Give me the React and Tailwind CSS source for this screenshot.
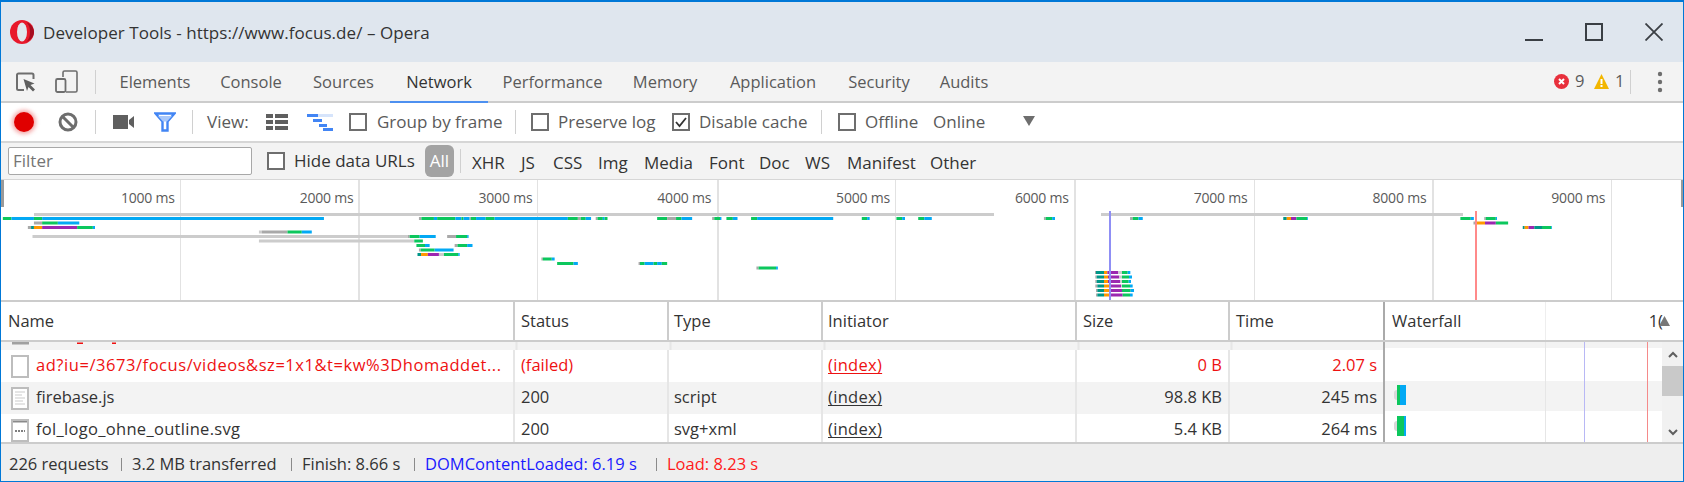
const GREEN = "#0cc75d";
const BLUE = "#03a9f4";
const TEAL = "#009688";
const ORANGE = "#ff9800";
const PURPLE = "#9c27b0";
const GREY = "#a9a9a9";
const LIGHT = "#cccccc";

// bars of the overview: [origin, scale, y, [from, to, colour]...]
const A = [0, 1 / 2.8];
const B = [560, 1 / 2.8];
const C = [1080, 0.385];
const D = [1080, 1 / 3];
const bars = [
  [...A, 218, [8, 32, GREEN], [32, 95, BLUE], [95, 118, GREEN], [118, 907, BLUE], [1173, 1180, GREY], [1180, 1215, GREEN], [1215, 1224, BLUE], [1224, 1275, GREEN], [1275, 1292, BLUE], [1292, 1298, GREEN], [1298, 1315, BLUE], [1315, 1318, GREY], [1318, 1333, GREEN], [1333, 1360, BLUE], [1360, 1385, GREEN], [1385, 1568, BLUE]],
  [...B, 218, [0, 22, BLUE], [22, 50, GREEN], [50, 58, GREY], [58, 72, GREEN], [72, 87, BLUE], [100, 105, GREY], [105, 120, GREEN], [120, 125, BLUE], [125, 133, GREEN], [272, 300, GREEN], [300, 325, GREY], [325, 340, GREEN], [340, 370, BLUE], [426, 432, GREY], [432, 448, GREEN], [448, 452, BLUE], [466, 484, GREEN], [484, 497, BLUE], [535, 552, GREEN], [552, 765, BLUE], [845, 860, GREEN], [860, 867, BLUE], [942, 958, GREEN], [958, 966, BLUE], [1003, 1020, GREEN], [1020, 1041, BLUE], [1355, 1360, GREY], [1360, 1378, GREEN], [1378, 1386, BLUE]],
  [...C, 218, [130, 137, GREY], [137, 152, GREEN], [152, 163, BLUE], [528, 537, TEAL], [537, 548, ORANGE], [548, 562, PURPLE], [562, 590, GREEN], [590, 592, BLUE], [988, 1015, GREEN], [1015, 1023, BLUE], [1050, 1054, GREY], [1054, 1080, GREEN], [1080, 1083, BLUE]],
  [...A, 222.5, [95, 118, GREY], [118, 162, GREEN], [162, 222, BLUE]],
  [...C, 222.5, [1022, 1030, GREY], [1030, 1052, ORANGE], [1052, 1080, PURPLE], [1080, 1112, GREEN]],
  [...A, 227, [78, 87, GREY], [87, 95, TEAL], [95, 118, ORANGE], [118, 216, PURPLE], [216, 260, GREEN], [260, 266, BLUE]],
  [...C, 227, [1150, 1155, TEAL], [1155, 1165, ORANGE], [1165, 1180, PURPLE], [1180, 1200, TEAL], [1200, 1224, GREEN], [1224, 1226, BLUE]],
  [...A, 231.5, [725, 733, LIGHT], [733, 805, GREY], [805, 845, GREEN], [845, 873, BLUE]],
  [...A, 236, [91, 1142, LIGHT], [1142, 1147, GREY], [1147, 1175, GREEN], [1175, 1220, BLUE], [1252, 1277, GREY], [1277, 1308, GREEN], [1308, 1312, BLUE]],
  [...A, 240.5, [725, 1160, LIGHT], [1160, 1184, GREEN]],
  [...A, 245, [1166, 1190, GREEN], [1190, 1203, BLUE], [1273, 1281, GREY], [1281, 1308, GREEN], [1308, 1323, BLUE]],
  [...A, 249.5, [1173, 1178, GREY], [1178, 1217, GREEN], [1217, 1270, BLUE]],
  [...A, 254, [1169, 1179, TEAL], [1179, 1198, ORANGE], [1198, 1229, PURPLE], [1229, 1243, LIGHT], [1243, 1283, GREEN], [1283, 1287, BLUE]],
  [...A, 258.5, [1516, 1520, GREY], [1520, 1545, GREEN], [1545, 1553, BLUE]],
  [...A, 263, [1560, 1568, GREEN]],
  [...B, 263, [0, 38, GREEN], [38, 50, BLUE], [220, 224, GREY], [224, 237, GREEN], [237, 262, BLUE], [262, 272, GREEN], [272, 285, BLUE], [285, 300, GREEN]],
  [...B, 267.5, [550, 556, GREY], [556, 605, GREEN], [605, 610, BLUE]],
  [...D, 272, [45, 48, GREY], [48, 72, TEAL], [72, 82, ORANGE], [82, 115, PURPLE], [115, 126, LIGHT], [126, 143, GREEN], [143, 151, BLUE]],
  [...D, 276.5, [46, 50, GREY], [50, 72, TEAL], [72, 84, ORANGE], [84, 118, PURPLE], [118, 126, LIGHT], [126, 147, GREEN], [147, 156, BLUE]],
  [...D, 281, [46, 50, GREY], [50, 72, TEAL], [72, 84, ORANGE], [84, 120, PURPLE], [120, 126, LIGHT], [126, 146, GREEN], [146, 153, BLUE]],
  [...D, 285.5, [46, 52, GREY], [52, 72, TEAL], [72, 90, ORANGE], [90, 123, PURPLE], [123, 126, LIGHT], [126, 150, GREEN], [150, 158, BLUE]],
  [...D, 290, [48, 52, GREY], [52, 72, TEAL], [72, 88, ORANGE], [88, 126, PURPLE], [126, 152, GREEN], [152, 162, BLUE]],
  [...D, 294.5, [48, 52, GREY], [52, 72, TEAL], [72, 90, ORANGE], [90, 128, PURPLE], [128, 150, GREEN], [150, 158, BLUE]],
];

const gridLines = [180, 358, 537, 717, 895, 1074, 1254, 1432, 1611];
const labels = ["1000 ms", "2000 ms", "3000 ms", "4000 ms", "5000 ms", "6000 ms", "7000 ms", "8000 ms", "9000 ms"];

const tabs = [
  ["Elements", "w-[100px]"],
  ["Console", "w-[92px]"],
  ["Sources", "w-[93px]"],
  ["Network", "w-[98px]"],
  ["Performance", "w-[129px]"],
  ["Memory", "w-[96px]"],
  ["Application", "w-[120px]"],
  ["Security", "w-[92px]"],
  ["Audits", "w-[78px]"],
];

const types = [
  ["XHR", "w-[49px]"],
  ["JS", "w-[32px]"],
  ["CSS", "w-[45px]"],
  ["Img", "w-[46px]"],
  ["Media", "w-[65px]"],
  ["Font", "w-[50px]"],
  ["Doc", "w-[46px]"],
  ["WS", "w-[42px]"],
  ["Manifest", "w-[83px]"],
  ["Other", "w-[60px]"],
];

function Separator({ className }) {
  return <div className={"w-px h-[24px] bg-[#d0d0d0] shrink-0 " + className} />;
}

function Checkbox({ checked, className }) {
  return (
    <div className={"w-[18px] h-[18px] border-2 border-[#6e6e6e] bg-white shrink-0 flex items-center justify-center " + className}>
      {checked && (
        <svg width="14" height="14" viewBox="0 0 14 14" fill="none">
          <path d="M2 7l3.5 4L12 3" stroke="#333" strokeWidth="1.8" />
        </svg>
      )}
    </div>
  );
}

function OperaLogo() {
  return (
    <svg width="24" height="24" viewBox="0 0 24 24" className="shrink-0">
      <circle cx="12" cy="12" r="12" fill="#e8182b" />
      <ellipse cx="12" cy="12" rx="5" ry="9.5" fill="#dfe6ee" />
      <path d="M16.5 2.2C21 4 24 7.7 24 12s-3 8-7.5 9.8C19 19.5 20 16 20 12s-1-7.5-3.5-9.8z" fill="#a50d20" />
    </svg>
  );
}

function TitleBar() {
  return (
    <div className="h-[60px] bg-[#dfe6ee] flex items-center pl-[9px] shrink-0">
      <OperaLogo />
      <div className="ml-[9px] pt-[1px] text-[17px] tracking-[0.05px] text-[#333333]">Developer Tools - https://www.focus.de/ – Opera</div>
      <div className="ml-auto flex items-center">
        <svg width="18" height="18" viewBox="0 0 18 18" className="mr-[42px]">
          <path d="M0 17h18" stroke="#3a3f44" strokeWidth="2" />
        </svg>
        <svg width="18" height="18" viewBox="0 0 18 18" className="mr-[42px]">
          <rect x="1" y="1" width="16" height="16" fill="none" stroke="#3a3f44" strokeWidth="2" />
        </svg>
        <svg width="18" height="18" viewBox="0 0 18 18" className="mr-[20px]">
          <path d="M0.5 0.5l17 17M17.5 0.5l-17 17" stroke="#3a3f44" strokeWidth="1.8" />
        </svg>
      </div>
    </div>
  );
}

function TabBar() {
  return (
    <div className="h-[41px] bg-[#f3f3f3] border-b-2 border-[#cccccc] flex items-center shrink-0">
      <svg width="20" height="20" viewBox="0 0 20 20" fill="none" className="ml-[15px]">
        <path d="M8 18H2.500A1.500 1.500 0 0 1 1 16.500V3A1.500 1.500 0 0 1 2.500 1.500H16A1.500 1.500 0 0 1 17.500 3V7" stroke="#6e6e6e" strokeWidth="2" />
        <path d="M7.500 7l11 4.500-4 1.500 4.500 4.500-2 2-4.500-4.500-1.500 4z" fill="#5f5f5f" />
      </svg>
      <svg width="23" height="23" viewBox="0 0 23 23" fill="none" className="ml-[19px]">
        <path d="M8 7V2.500A1.500 1.500 0 0 1 9.500 1H20.500A1.500 1.500 0 0 1 22 2.500V20.500A1.500 1.500 0 0 1 20.500 22H11" stroke="#6e6e6e" strokeWidth="1.600" />
        <rect x="1" y="9" width="9.500" height="13" rx="1.500" stroke="#6e6e6e" strokeWidth="1.800" />
      </svg>
      <Separator className="ml-[17px]" />
      <div className="flex self-stretch ml-[9px]">
        {tabs.map(([name, w]) => (
          <div
            key={name}
            className={
              w +
              " relative flex items-center justify-center pt-[2px] text-[16.500px] " +
              (name === "Network" ? "text-[#333333]" : "text-[#5a5a5a]")
            }
          >
            {name}
            {name === "Network" && <div className="absolute left-0 right-0 -bottom-[2px] h-[2px] bg-[#4d90f0]" />}
          </div>
        ))}
      </div>
      <div className="ml-auto flex items-center text-[16.500px] text-[#5a5a5a]">
        <svg width="15" height="15" viewBox="0 0 15 15">
          <circle cx="7.500" cy="7.500" r="7.500" fill="#e8303c" />
          <path d="M5 5l5 5M10 5l-5 5" stroke="#fff" strokeWidth="2" />
        </svg>
        <span className="ml-[6px] w-[19px]">9</span>
        <svg width="15" height="15" viewBox="0 0 15 15">
          <path d="M7.500 0L15 15H0z" fill="#f2b600" />
          <path d="M7.500 5v5M7.500 11v2" stroke="#fff" strokeWidth="2" />
        </svg>
        <span className="ml-[6px] w-[15px]">1</span>
        <Separator className="ml-0" />
        <svg width="6" height="22" viewBox="0 0 6 22" className="ml-[26px] mr-[20px]">
          <circle cx="3" cy="3" r="2.200" fill="#6e6e6e" />
          <circle cx="3" cy="11" r="2.200" fill="#6e6e6e" />
          <circle cx="3" cy="19" r="2.200" fill="#6e6e6e" />
        </svg>
      </div>
    </div>
  );
}

function NetToolbar() {
  return (
    <div className="h-[40px] bg-white border-b-2 border-[#d6d6d6] flex items-center text-[17px] text-[#5a5a5a] shrink-0">
      <div className="ml-[13px] w-[20px] h-[20px] rounded-full bg-[#e00000] shadow-[0_0_4px_2px_rgba(224,0,0,0.35)] shrink-0" />
      <svg width="20" height="20" viewBox="0 0 20 20" fill="none" className="ml-[24px]">
        <circle cx="10" cy="10" r="8" stroke="#6e6e6e" strokeWidth="3" />
        <path d="M4.500 4.500l11 11" stroke="#6e6e6e" strokeWidth="3" />
      </svg>
      <Separator className="ml-[17px]" />
      <svg width="21" height="14" viewBox="0 0 21 14" className="ml-[17px]">
        <path d="M0 0h15v14H0zM16 5l5-4v12l-5-4z" fill="#5f5f5f" />
      </svg>
      <svg width="22" height="20" viewBox="0 0 22 20" fill="none" className="ml-[20px]">
        <path d="M1.500 1.500h19l-7 8v9h-5v-9z" stroke="#4285f4" strokeWidth="2.400" />
        <path d="M4 4h14l-5 5.500H9z" fill="#a9c8fa" />
      </svg>
      <Separator className="ml-[16px]" />
      <span className="ml-[14px] w-[59px]">View:</span>
      <svg width="22" height="16" viewBox="0 0 22 16" className="shrink-0">
        <path d="M0 0h7v4H0zM9 0h13v4H9zM0 6h7v4H0zM9 6h13v4H9zM0 12h7v4H0zM9 12h13v4H9z" fill="#5f5f5f" />
      </svg>
      <svg width="26" height="18" viewBox="0 0 26 18" className="ml-[19px] shrink-0">
        <path d="M0 1h26v3H0z" fill="#d6e4fb" />
        <path d="M0 1h11v3H0zM6 6h9v3H6zM12 11h8v3h-8zM16 15h10v3H16z" fill="#4285f4" />
      </svg>
      <Checkbox className="ml-[16px]" />
      <span className="ml-[10px] w-[138px] whitespace-nowrap">Group by frame</span>
      <Separator className="" />
      <Checkbox className="ml-[15px]" />
      <span className="ml-[9px] w-[114px] whitespace-nowrap">Preserve log</span>
      <Checkbox checked />
      <span className="ml-[9px] w-[122px] whitespace-nowrap">Disable cache</span>
      <Separator className="" />
      <Checkbox className="ml-[16px]" />
      <span className="ml-[9px] w-[68px]">Offline</span>
      <span className="w-[90px]">Online</span>
      <svg width="12" height="10" viewBox="0 0 12 10" className="-mt-[2px]">
        <path d="M0 0h12L6 10z" fill="#6e6e6e" />
      </svg>
    </div>
  );
}

function FilterBar() {
  return (
    <div className="h-[37px] bg-[#f3f3f3] border-b border-[#d6d6d6] flex items-center text-[17px] text-[#333333] shrink-0">
      <div className="ml-[7px] w-[244px] h-[28px] bg-white border border-[#a8a8a8] rounded-[2px] pl-[4px] flex items-center text-[#757575]">Filter</div>
      <Checkbox className="ml-[15px]" />
      <span className="ml-[9px] w-[131px] whitespace-nowrap">Hide data URLs</span>
      <div className="w-[29px] h-[32px] rounded-[6px] bg-[#a3a3a3] text-white flex items-center justify-center">All</div>
      <Separator className="ml-[6px]" />
      <div className="flex ml-[11px] pt-[3px] whitespace-nowrap">
        {types.map(([name, w]) => (
          <span key={name} className={w}>{name}</span>
        ))}
      </div>
    </div>
  );
}

function Overview() {
  return (
    <div className="h-[122px] bg-white border-b-2 border-[#cccccc] relative shrink-0">
      <svg width="1682" height="120" viewBox="1 180 1682 120" className="absolute inset-0">
        {gridLines.map((x, i) => (
          <rect key={x} x={x} y="180" width={i % 2 ? 2 : 1} height="120" fill="#e2e2e2" />
        ))}
        <rect x="1" y="180" width="3" height="27" fill="#9a9a9a" />
        <rect x="1681" y="180" width="2" height="27" fill="#9a9a9a" />
        <rect x="34" y="213" width="960" height="3" fill={LIGHT} />
        <rect x="1101" y="213" width="362" height="3" fill={LIGHT} />
        {bars.map(([origin, scale, y, ...segs], i) =>
          segs.map(([a, b, c], j) => (
            <rect key={i + "-" + j} x={origin + a * scale} y={y - 1} width={(b - a) * scale} height="3" fill={c} />
          ))
        )}
        <rect x="1109" y="211" width="2" height="89" fill="#8f8ff5" />
        <rect x="1475" y="211" width="2" height="89" fill="#ff8a8a" />
      </svg>
      <div className="relative flex pt-[7px] text-[14px] tracking-[-0.2px] text-[#5a5a5a]">
        {labels.map((l) => (
          <div key={l} className="w-[178.800px] shrink-0 text-right pr-[5px]">{l}</div>
        ))}
      </div>
    </div>
  );
}

function FileIcon({ kind }) {
  return (
    <svg width="18" height="23" viewBox="0 0 18 23" className="shrink-0">
      <rect x="1" y="1" width="16" height="21" fill="#fff" stroke="#bdbdbd" strokeWidth="2" />
      {kind === "js" && <path d="M4 5h10M4 8h7M4 11h10M4 14h8M4 17h10" stroke="#dddddd" strokeWidth="1.500" />}
      {kind === "logo" && (
        <>
          <path d="M2 2h14v1.500H2z" fill="#8a8a8a" />
          <path d="M4 12h10" stroke="#555" strokeWidth="1.500" strokeDasharray="2 1" />
        </>
      )}
    </svg>
  );
}

const cols = [
  "w-[514px] pl-[10px]",
  "w-[154px] pl-[6px]",
  "w-[154px] pl-[5px]",
  "w-[254px] pl-[5px]",
  "w-[153px] pr-[6px] justify-end",
  "w-[155px] pr-[6px] justify-end",
];

function Row({ cells, kind, className, red, nameClass = "" }) {
  return (
    <div className={"flex shrink-0 " + className + (red ? " text-[#ee1111]" : " text-[#333333]")}>
      {cells.map((c, i) => (
        <div
          key={i}
          className={cols[i] + " flex items-center h-[32px] border-r-2 border-[#e6e6e6] whitespace-nowrap overflow-hidden shrink-0"}
        >
          {i === 0 && <FileIcon kind={kind} />}
          {i === 3 ? (
            <span className="underline underline-offset-2 tracking-[0.3px] pb-[1px]">{c}</span>
          ) : (
            <span className={"pb-[1px] " + (i === 0 ? "ml-[7px] " + nameClass : "")}>{c}</span>
          )}
        </div>
      ))}
    </div>
  );
}

function Table() {
  return (
    <div className="h-[142px] flex flex-col text-[16.500px] shrink-0 border-b-2 border-[#cccccc]">
      <div className="h-[40px] flex border-b-2 border-[#cccccc] bg-white text-[#333333] shrink-0">
        {["Name", "Status", "Type", "Initiator", "Size", "Time"].map((h, i) => (
          <div
            key={h}
            className={
              ["w-[514px] pl-[7px]", "w-[154px] pl-[6px]", "w-[154px] pl-[5px]", "w-[254px] pl-[5px]", "w-[153px] pl-[6px]", "w-[155px] pl-[6px]"][i] +
              " flex items-center border-r-2 " +
              (i === 5 ? "border-[#aaaaaa]" : "border-[#cccccc]")
            }
          >
            {h}
          </div>
        ))}
        <div className="w-[160px] flex items-center pl-[7px]">Waterfall</div>
        <div className="flex-1 relative border-l border-[#eeeeee] flex items-center justify-end overflow-hidden">
          <span className="pr-[20px]">1(</span>
          <svg width="11" height="10" viewBox="0 0 11 10" className="absolute right-[13px] top-[14px]">
            <path d="M5.500 0L11 10H0z" fill="#777777" />
          </svg>
        </div>
      </div>
      <div className="flex flex-1 overflow-hidden">
        <div className="flex flex-col w-[1384px] shrink-0 border-r-2 border-[#aaaaaa] overflow-hidden">
          {/* the row above is scrolled out, only its last pixels are left */}
          <div className="h-[8px] bg-[#f3f3f3] shrink-0 flex">
            <svg width="1382" height="8" viewBox="0 342 1382 8">
              <rect x="11" y="342" width="17" height="2.500" fill="#a0a0a0" />
              <rect x="76" y="342.500" width="6" height="1.500" fill="#ee1111" />
              <rect x="111" y="342.500" width="4" height="1.500" fill="#ee1111" />
              <path d="M515.500 342v8M669.500 342v8M823.500 342v8M1077.500 342v8M1230.500 342v8" stroke="#e6e6e6" strokeWidth="2" />
            </svg>
          </div>
          <Row red nameClass="tracking-[0.55px]" className="bg-white" cells={["ad?iu=/3673/focus/videos&sz=1x1&t=kw%3Dhomaddet...", "(failed)", "", "(index)", "0 B", "2.07 s"]} />
          <Row kind="js" className="bg-[#f3f3f3]" cells={["firebase.js", "200", "script", "(index)", "98.8 KB", "245 ms"]} />
          <Row kind="logo" nameClass="tracking-[0.3px]" className="bg-white" cells={["fol_logo_ohne_outline.svg", "200", "svg+xml", "(index)", "5.4 KB", "264 ms"]} />
        </div>
        <div className="flex-1 relative flex">
          <div className="flex-1 flex flex-col">
            <div className="h-[6px] bg-[#f3f3f3]" />
            <div className="h-[33px] bg-white" />
            <div className="h-[30px] bg-[#f3f3f3] pl-[12px] pt-[4px]">
              <WaterBar g="w-[3px]" b="w-[6px]" />
            </div>
            <div className="flex-1 bg-white pl-[12px] pt-[5px]">
              <WaterBar g="w-[7px]" b="w-[2px]" />
            </div>
          </div>
          <div className="w-[21px] bg-[#f1f1f1] flex flex-col items-center relative">
            <svg width="12" height="8" viewBox="0 0 12 8" fill="none" className="mt-[9px]">
              <path d="M2 6l4-4 4 4" stroke="#5f5f5f" strokeWidth="2" />
            </svg>
            <div className="w-full h-[30px] bg-[#c9c9c9] mt-[7px]" />
            <svg width="12" height="8" viewBox="0 0 12 8" fill="none" className="mt-auto mb-[6px]">
              <path d="M2 2l4 4 4-4" stroke="#5f5f5f" strokeWidth="2" />
            </svg>
          </div>
          <div className="absolute top-0 bottom-0 left-[160px] w-px bg-[#e6e6e6]" />
          <div className="absolute top-0 bottom-0 left-[199px] w-px bg-[#b8b8f5]" />
          <div className="absolute top-0 bottom-0 left-[262px] w-px bg-[#f58a8a]" />
        </div>
      </div>
    </div>
  );
}

function WaterBar({ g, b }) {
  return (
    <div className="flex h-[20px] items-stretch relative">
      <div className="absolute -left-[3px] top-[5px] h-[10px] w-[3px] rounded-l-full bg-[#d8d8d8]" />
      <div className={g + " bg-[#0cc75d]"} />
      <div className={b + " bg-[#03a9f4]"} />
    </div>
  );
}

function StatusBar() {
  return (
    <div className="flex-1 bg-[#eeeeee] flex items-center pl-[8px] pt-[3px] text-[16.500px] text-[#333333] whitespace-nowrap">
      <span className="w-[112px]">226 requests</span>
      <div className="w-px h-[13px] bg-[#8a8a8a]" />
      <span className="w-[169px] pl-[10px]">3.2 MB transferred</span>
      <div className="w-px h-[13px] bg-[#8a8a8a]" />
      <span className="w-[122px] pl-[10px]">Finish: 8.66 s</span>
      <div className="w-px h-[13px] bg-[#8a8a8a]" />
      <span className="w-[241px] pl-[10px] text-[#1a1aff]">DOMContentLoaded: 6.19 s</span>
      <div className="w-px h-[13px] bg-[#8a8a8a]" />
      <span className="pl-[10px] text-[#ff1a1a]">Load: 8.23 s</span>
    </div>
  );
}

export default function App() {
  return (
    <div
      className="w-[1684px] h-[482px] flex flex-col overflow-hidden border-x border-t-2 border-b border-[#0078d7] bg-white"
      style={{ fontFamily: '"Open Sans", "Noto Sans", sans-serif' }}
    >
      <TitleBar />
      <TabBar />
      <NetToolbar />
      <FilterBar />
      <Overview />
      <Table />
      <StatusBar />
    </div>
  );
}
